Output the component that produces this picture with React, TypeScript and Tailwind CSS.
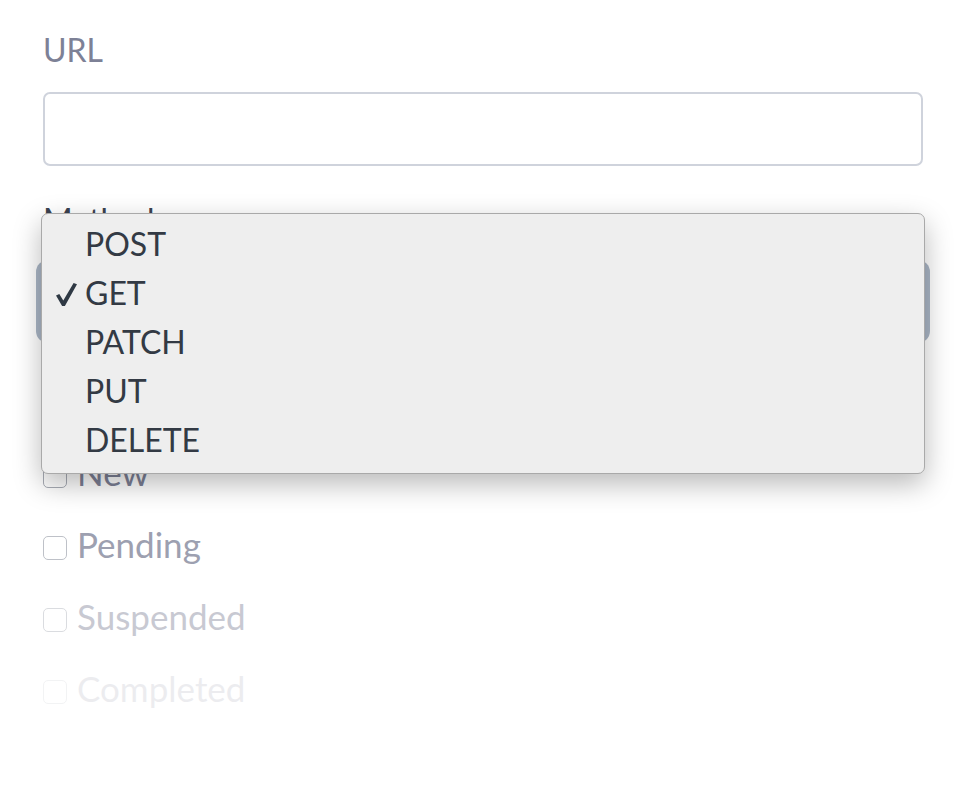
import React from 'react';

const methods = ['POST', 'GET', 'PATCH', 'PUT', 'DELETE'];

const statuses = [
  { name: 'New', fade: 'opacity-100' },
  { name: 'Pending', fade: 'opacity-75' },
  { name: 'Suspended', fade: 'opacity-[0.42]' },
  { name: 'Completed', fade: 'opacity-[0.14]' },
];

const Check: React.FC = () => (
  <svg width="21" height="23" viewBox="0 0 21 23" className="text-[#2f3944]">
    <path d="M0 12.6 L3.3 10.9 L7.3 17.4 L17.6 0 L21 1.3 L8.9 23 L6.1 23 Z" fill="currentColor" />
  </svg>
);

const App: React.FC = () => {
  return (
    <div
      className="relative min-h-screen bg-white pl-[43px] pr-[47px] pt-[31px]"
      style={{ fontFamily: 'Lato, "Open Sans", sans-serif' }}
    >
      {/* URL field */}
      <label className="block text-[32px] leading-[38px] text-[#7d8196]">URL</label>
      <div className="mt-[23px] h-[74px] rounded-[7px] border-2 border-[#cfd3dc] bg-white" />

      {/* Method field, covered by the open menu */}
      <label className="mt-[35px] block text-[32px] leading-[38px] text-[#3b4250]">Method</label>
      <div className="-mx-[7px] mt-[21px] h-[83px] rounded-[12px] bg-[#aab6c6]" />

      {/* Status checkboxes */}
      <div className="mt-[108px] flex flex-col gap-[30px]">
        {statuses.map((s) => (
          <div key={s.name} className={`flex h-[42px] items-start gap-[10px] ${s.fade}`}>
            <span className="mt-[13px] h-[24px] w-[24px] shrink-0 rounded-[5px] border border-[#a9adb6] bg-white" />
            <span className="text-[35px] leading-[42px] text-[#7d8196]">{s.name}</span>
          </div>
        ))}
      </div>

      {/* open native select menu */}
      <div className="absolute left-[41px] top-[213px] w-[884px] rounded-[7px] border border-[#a9a9a9] bg-[#eeeeee] pb-[9px] pt-[5px] shadow-[0_10px_28px_rgba(0,0,0,0.28)]">
        {methods.map((m) => (
          <div key={m} className="relative flex h-[49px] items-center pl-[43px] text-[32px] leading-[38px] text-[#333a44]">
            {m === 'GET' && (
              <span className="absolute left-[14px] top-[15px]">
                <Check />
              </span>
            )}
            {m}
          </div>
        ))}
      </div>
    </div>
  );
};

export default App;
